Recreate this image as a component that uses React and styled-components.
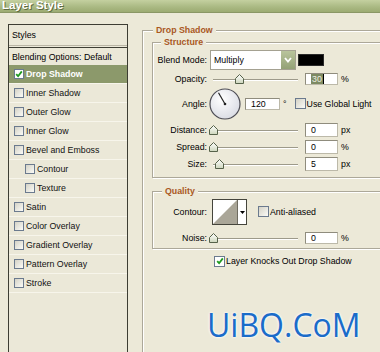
import React from 'react';
import styled, { createGlobalStyle } from 'styled-components';

const Global = createGlobalStyle`
  html, body { margin: 0; padding: 0; background: #ece9d8; }
  body { font-family: "Liberation Sans", Arial, sans-serif; }
`;

const Window = styled.div`
  position: relative;
  width: 380px;
  height: 352px;
  overflow: hidden;
  background: #ece9d8;
  font-family: "Liberation Sans", Arial, sans-serif;
  font-size: 8.8px;
  color: #000;
`;

const TitleBar = styled.div`
  height: 12px;
  overflow: hidden;
  padding-left: 2px;
  background: linear-gradient(#c4d0a0, #abba84 55%, #9cab72);
  border-bottom: 1px solid #8a9765;
`;

const TitleText = styled.div`
  margin-top: -1px;
  font: bold 11.5px/13px "Liberation Sans", Arial, sans-serif;
  color: #fff;
  text-shadow: 1px 1px 0 #5d6a40;
`;

const Body = styled.div`
  display: flex;
  align-items: flex-start;
  padding: 11px 0 0 8px;
`;

const StylesPanel = styled.div`
  flex: none;
  width: 118px;
  height: 340px;
  border: 1px solid #3d3d33;
  background: #ebe8d8;
`;

const PanelHeader = styled.div`
  height: 20px;
  display: flex;
  align-items: center;
  padding-left: 3px;
  border-bottom: 1px solid #b9b5a5;
`;

const PanelDivider = styled.div`
  height: 1px;
  margin-top: 1px;
  background: #3d3d33;
`;

const BlendingRow = styled.div`
  height: 17px;
  display: flex;
  align-items: center;
  padding-left: 3px;
`;

const StyleItem = styled.div`
  height: 18px;
  display: flex;
  align-items: center;
  gap: 2px;
  padding-left: ${p => (p.$indent ? 16 : 5)}px;
  border-bottom: 1px solid #f7f5eb;
  background: ${p => (p.$selected ? '#8c996b' : 'transparent')};
  color: ${p => (p.$selected ? '#fff' : '#111')};
  font-weight: ${p => (p.$selected ? 'bold' : 'normal')};
  white-space: nowrap;
`;

const Box = styled.span`
  flex: none;
  box-sizing: border-box;
  width: ${p => p.$size || 10}px;
  height: ${p => p.$size || 10}px;
  border: 1px solid #6b7a8e;
  background: ${p => (p.$on ? '#fff' : 'linear-gradient(135deg, #d4d2c6, #fbfbf7)')};
  display: inline-flex;
  align-items: center;
  justify-content: center;
`;

const Check = ({ on, size }) => (
  <Box $on={on} $size={size}>
    {on && (
      <svg width="8" height="8" viewBox="0 0 8 8">
        <path d="M1.2 4.2 L3.1 6.2 L6.8 1.4" fill="none" stroke="#1f9a1f" strokeWidth="1.8" />
      </svg>
    )}
  </Box>
);

const Main = styled.div`
  flex: none;
  margin-left: 14px;
  margin-top: 1px;
`;

const Group = styled.fieldset`
  margin: ${p => p.$mt || 0}px 0 0 0;
  min-width: 0;
  width: ${p => p.$w}px;
  min-height: ${p => p.$minH || 0}px;
  box-sizing: border-box;
  padding: ${p => p.$pad};
  border: 1px solid #aca899;
  box-shadow: inset 1px 1px 0 #fff, 1px 1px 0 #fff;
  display: flex;
  flex-direction: column;
  justify-content: flex-start;
  gap: ${p => p.$gap || 0}px;
`;

const Legend = styled.legend`
  margin-left: ${p => p.$ml || 1}px;
  padding: 0 3px;
  line-height: 10px;
  font-weight: bold;
  color: #a9581f;
  background: #ece9d8;
`;

const Row = styled.div`
  flex: none;
  display: flex;
  align-items: center;
  height: ${p => p.$h}px;
  white-space: nowrap;
  margin-top: ${p => p.$mt || 0}px;
  padding-left: ${p => p.$pl || 0}px;
`;

const Label = styled.div`
  flex: none;
  width: 54px;
  text-align: right;
`;

const Select = styled.div`
  flex: none;
  box-sizing: border-box;
  width: 86px;
  height: 20px;
  margin-left: 3px;
  border: 1px solid #a4a191;
  background: #fff;
  display: flex;
  align-items: center;
  padding-left: 3px;
`;

const SelectText = styled.span`
  flex: 1;
`;

const SelectButton = styled.div`
  width: 14px;
  height: 18px;
  background: linear-gradient(#b9c49c, #93a176);
  display: flex;
  align-items: center;
  justify-content: center;
`;

const Swatch = styled.div`
  flex: none;
  box-sizing: border-box;
  width: 26px;
  height: 12px;
  margin-left: 2px;
  background: #000;
  border: 1px solid #2a2a2a;
`;

const SliderWrap = styled.div`
  position: relative;
  flex: none;
  width: 85px;
  height: 10px;
  margin-left: 6px;
`;

const Track = styled.div`
  position: absolute;
  left: 0;
  right: 0;
  top: 5px;
  height: 0;
  border-top: 1px solid #9d9a8a;
  border-bottom: 1px solid #fff;
`;

const Thumb = styled.svg`
  position: absolute;
  top: 0;
  left: ${p => (p.$pct * 85) / 100 - 4}px;
`;

const Slider = ({ pct }) => (
  <SliderWrap>
    <Track />
    <Thumb $pct={pct} width="9" height="10" viewBox="0 0 9 10">
      <defs>
        <linearGradient id="thumbFill" x1="0" y1="0" x2="0" y2="1">
          <stop offset="0" stopColor="#ffffff" />
          <stop offset="1" stopColor="#cdd6bc" />
        </linearGradient>
      </defs>
      <path d="M0.5 4.5 L4.5 0.5 L8.5 4.5 L8.5 9.5 L0.5 9.5 Z" fill="url(#thumbFill)" stroke="#56624a" strokeWidth="1" />
    </Thumb>
  </SliderWrap>
);

const Field = styled.div`
  flex: none;
  box-sizing: border-box;
  width: ${p => p.$w || 33}px;
  height: ${p => p.$h || 14}px;
  margin-left: ${p => p.$ml || 7}px;
  padding-left: 5px;
  background: #fff;
  border: 1px solid #bcb9a9;
  border-top-color: #8f8c7d;
  border-left-color: #8f8c7d;
  display: flex;
  align-items: center;
`;

const Selected = styled.span`
  background: #7d8a62;
  color: #eef0e2;
  padding: 0 1px;
  border-right: 1px solid #000;
`;

const Unit = styled.span`
  margin-left: ${p => p.$ml || 3}px;
`;

const Text = styled.span`
  margin-left: ${p => p.$ml || 1}px;
`;

const Dial = styled.svg`
  flex: none;
  margin-left: 2px;
`;

const ContourBox = styled.div`
  flex: none;
  box-sizing: border-box;
  width: 35px;
  height: 26px;
  margin-left: 5px;
  border: 1px solid #45453c;
  background: #fff;
  display: flex;
`;

const ContourArrow = styled.div`
  flex: 1;
  border-left: 1px solid #6e6b60;
  display: flex;
  align-items: center;
  justify-content: center;
`;

const Watermark = styled.div`
  position: absolute;
  left: 207px;
  top: 309px;
  font: 32px/32px "Open Sans", "Noto Sans", sans-serif;
  color: #1b6cc9;
  text-shadow: 0 0 2px #fff, 0 0 3px #fff;
`;

const styleItems = [
  { label: 'Drop Shadow', checked: true, selected: true },
  { label: 'Inner Shadow' },
  { label: 'Outer Glow' },
  { label: 'Inner Glow' },
  { label: 'Bevel and Emboss' },
  { label: 'Contour', indent: true },
  { label: 'Texture', indent: true },
  { label: 'Satin' },
  { label: 'Color Overlay' },
  { label: 'Gradient Overlay' },
  { label: 'Pattern Overlay' },
  { label: 'Stroke' },
];

const sliders = [
  { label: 'Distance:', pct: 0, value: '0', unit: 'px' },
  { label: 'Spread:', pct: 0, value: '0', unit: '%' },
  { label: 'Size:', pct: 7, value: '5', unit: 'px' },
];

export default function App() {
  return (
    <Window>
      <Global />
      <TitleBar>
        <TitleText>Layer Style</TitleText>
      </TitleBar>
      <Body>
        <StylesPanel>
          <PanelHeader>Styles</PanelHeader>
          <PanelDivider />
          <BlendingRow>Blending Options: Default</BlendingRow>
          {styleItems.map(it => (
            <StyleItem key={it.label} $indent={it.indent} $selected={it.selected}>
              <Check on={it.checked} />
              <span>{it.label}</span>
            </StyleItem>
          ))}
        </StylesPanel>

        <Main>
          <Group $w={250} $minH={340} $pad="0 0 0 9px">
            <Legend>Drop Shadow</Legend>

            <Group $w={240} $mt={2} $pad="3px 0 6px 0" $gap={3}>
              <Legend $ml={8}>Structure</Legend>
              <Row $h={20}>
                <Label>Blend Mode:</Label>
                <Select>
                  <SelectText>Multiply</SelectText>
                  <SelectButton>
                    <svg width="8" height="6" viewBox="0 0 8 6">
                      <path d="M1 1 L4 4.5 L7 1" fill="none" stroke="#fff" strokeWidth="1.8" />
                    </svg>
                  </SelectButton>
                </Select>
                <Swatch />
              </Row>
              <Row $h={12}>
                <Label>Opacity:</Label>
                <Slider pct={30} />
                <Field $h={12}>
                  <Selected>30</Selected>
                </Field>
                <Unit>%</Unit>
              </Row>
              <Row $h={32}>
                <Label>Angle:</Label>
                <Dial width="32" height="32" viewBox="0 0 32 32">
                  <defs>
                    <radialGradient id="dialFill" cx="0.4" cy="0.35" r="0.7">
                      <stop offset="0" stopColor="#ffffff" />
                      <stop offset="1" stopColor="#d9dbe3" />
                    </radialGradient>
                  </defs>
                  <circle cx="16" cy="16" r="15" fill="url(#dialFill)" stroke="#4d4d55" strokeWidth="1.2" />
                  <line x1="16" y1="16" x2="9.5" y2="4.8" stroke="#222" strokeWidth="1.2" />
                  <circle cx="16" cy="16" r="1.3" fill="#222" />
                </Dial>
                <Field $w={35} $h={12} $ml={4}>120</Field>
                <Unit>°</Unit>
                <Unit $ml={8}>
                  <Check size={11} />
                </Unit>
                <Text>Use Global Light</Text>
              </Row>
              {sliders.map(s => (
                <Row $h={14} key={s.label}>
                  <Label>{s.label}</Label>
                  <Slider pct={s.pct} />
                  <Field>{s.value}</Field>
                  <Unit>{s.unit}</Unit>
                </Row>
              ))}
            </Group>

            <Group $w={240} $mt={8} $pad="3px 0 4px 0">
              <Legend $ml={9}>Quality</Legend>
              <Row $h={26}>
                <Label>Contour:</Label>
                <ContourBox>
                  <svg width="24" height="24" viewBox="0 0 24 24">
                    <polygon points="0,24 24,0 24,24" fill="#aaa698" />
                  </svg>
                  <ContourArrow>
                    <svg width="5" height="3" viewBox="0 0 5 3">
                      <polygon points="0,0 5,0 2.5,3" fill="#000" />
                    </svg>
                  </ContourArrow>
                </ContourBox>
                <Unit $ml={11}>
                  <Check size={11} />
                </Unit>
                <Text>Anti-aliased</Text>
              </Row>
              <Row $h={13} $mt={6}>
                <Label>Noise:</Label>
                <Slider pct={0} />
                <Field $h={12}>0</Field>
                <Unit>%</Unit>
              </Row>
            </Group>

            <Row $h={12} $mt={6} $pl={62}>
              <Check on size={11} />
              <Text>Layer Knocks Out Drop Shadow</Text>
            </Row>
          </Group>
        </Main>
      </Body>
      <Watermark>UiBQ.CoM</Watermark>
    </Window>
  );
}
